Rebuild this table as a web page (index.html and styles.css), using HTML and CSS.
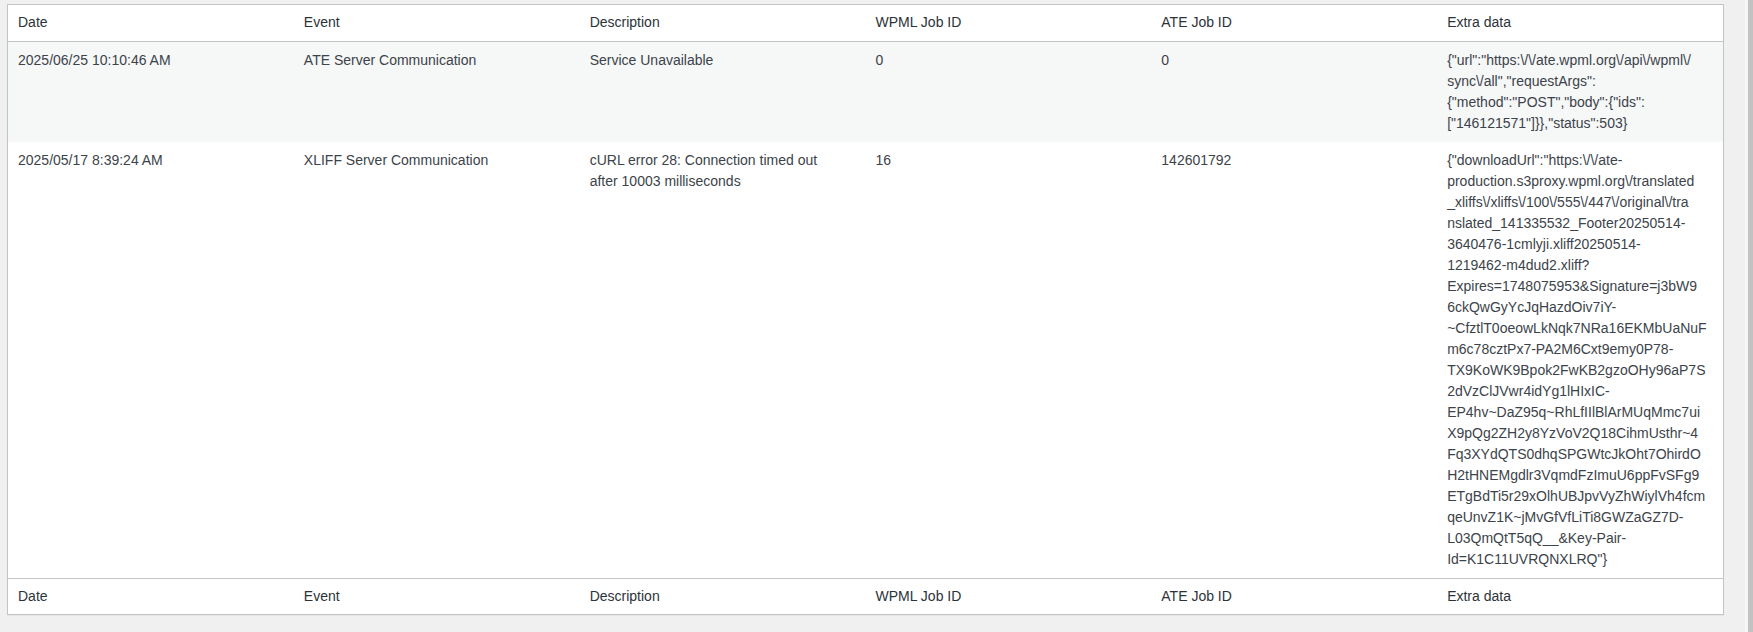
FILE: index.html
```html
<!DOCTYPE html>
<html lang="en">
<head>
<meta charset="utf-8">
<title>WPML Logs</title>
<link rel="stylesheet" href="styles.css">
</head>
<body>
<div class="page">
  <main class="main">
    <table class="log-table">
      <colgroup>
        <col><col><col><col><col><col>
      </colgroup>
      <thead>
        <tr>
          <th>Date</th>
          <th>Event</th>
          <th>Description</th>
          <th>WPML Job ID</th>
          <th>ATE Job ID</th>
          <th>Extra data</th>
        </tr>
      </thead>
      <tbody>
        <tr class="alt">
          <td>2025/06/25 10:10:46 AM</td>
          <td>ATE Server Communication</td>
          <td>Service Unavailable</td>
          <td>0</td>
          <td>0</td>
          <td class="extra"><span>{"url":"https:\/\/ate.wpml.org\/api\/wpml\/</span><span>sync\/all","requestArgs":</span><span>{"method":"POST","body":{"ids":</span><span>["146121571"]}},"status":503}</span></td>
        </tr>
        <tr>
          <td>2025/05/17 8:39:24 AM</td>
          <td>XLIFF Server Communication</td>
          <td>cURL error 28: Connection timed out<br>after 10003 milliseconds</td>
          <td>16</td>
          <td>142601792</td>
          <td class="extra"><span>{"downloadUrl":"https:\/\/ate-</span><span>production.s3proxy.wpml.org\/translated</span><span>_xliffs\/xliffs\/100\/555\/447\/original\/tra</span><span>nslated_141335532_Footer20250514-</span><span>3640476-1cmlyji.xliff20250514-</span><span>1219462-m4dud2.xliff?</span><span>Expires=1748075953&amp;Signature=j3bW9</span><span>6ckQwGyYcJqHazdOiv7iY-</span><span>~CfztlT0oeowLkNqk7NRa16EKMbUaNuF</span><span>m6c78cztPx7-PA2M6Cxt9emy0P78-</span><span>TX9KoWK9Bpok2FwKB2gzoOHy96aP7S</span><span>2dVzClJVwr4idYg1lHIxIC-</span><span>EP4hv~DaZ95q~RhLfIIlBlArMUqMmc7ui</span><span>X9pQg2ZH2y8YzVoV2Q18CihmUsthr~4</span><span>Fq3XYdQTS0dhqSPGWtcJkOht7OhirdO</span><span>H2tHNEMgdlr3VqmdFzImuU6ppFvSFg9</span><span>ETgBdTi5r29xOlhUBJpvVyZhWiylVh4fcm</span><span>qeUnvZ1K~jMvGfVfLiTi8GWZaGZ7D-</span><span>L03QmQtT5qQ__&amp;Key-Pair-</span><span>Id=K1C11UVRQNXLRQ"}</span></td>
        </tr>
      </tbody>
      <tfoot>
        <tr>
          <th>Date</th>
          <th>Event</th>
          <th>Description</th>
          <th>WPML Job ID</th>
          <th>ATE Job ID</th>
          <th>Extra data</th>
        </tr>
      </tfoot>
    </table>
  </main>
  <div class="scrollbar"><div class="scroll-edge"></div><div class="scroll-thumb"></div></div>
</div>
</body>
</html>
```

FILE: styles.css
```css
html, body {
  margin: 0;
  padding: 0;
  background: #f0f0f1;
  height: 100%;
}

body {
  font-family: "Liberation Sans", Arial, sans-serif;
  font-size: 14px;
  color: #3c434a;
}

.page {
  display: flex;
  min-height: 632px;
}

.main {
  flex: 1;
  padding: 4px 21px 0 7px;
}

.log-table {
  width: 100%;
  table-layout: fixed;
  border-collapse: separate;
  border-spacing: 0;
  background: #fff;
  border: 1px solid #c3c4c7;
  box-shadow: 0 1px 1px rgba(0, 0, 0, 0.04);
}

.log-table th {
  text-align: left;
  font-weight: 400;
  color: #2c3338;
  padding: 8px 10px;
  line-height: 1.4em;
}

.log-table thead th {
  border-bottom: 1px solid #c3c4c7;
}

.log-table tfoot th {
  border-top: 1px solid #c3c4c7;
}

.log-table td {
  vertical-align: top;
  padding: 8px 10px;
  line-height: 21px;
  color: #3c434a;
}

.log-table tr.alt td {
  background: #f6f7f7;
}

.extra span {
  display: block;
  white-space: nowrap;
}

.scrollbar {
  display: flex;
  width: 8px;
  flex: none;
}

.scroll-edge {
  width: 3px;
  background: #f6f6f6;
}

.scroll-thumb {
  flex: 1;
  background: #c2c2c2;
}
```
